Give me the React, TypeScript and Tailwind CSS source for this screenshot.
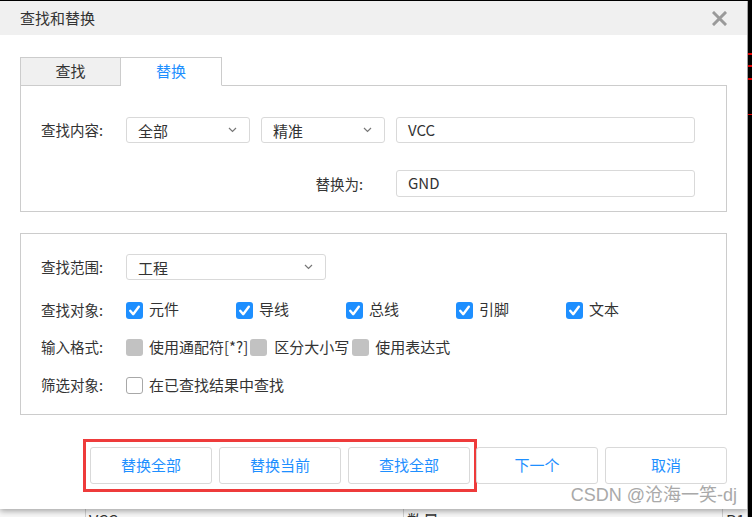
import React from "react";

const FONT = { fontFamily: '"Microsoft YaHei", "Noto Sans CJK SC", "Noto Sans", sans-serif' };

function Chevron() {
  return (
    <svg width="9" height="6" viewBox="0 0 9 6" className="shrink-0">
      <path d="M1 1 L4.5 4.5 L8 1" fill="none" stroke="#777" strokeWidth="1.2" />
    </svg>
  );
}

function Select({ value, w }: { value: string; w: string }) {
  return (
    <div className={`${w} h-[26px] flex items-center justify-between pl-[11px] pr-[12px] border border-[#d9d9d9] rounded-[3px] bg-white`}>
      <span className="text-[15px] text-[#333] leading-none">{value}</span>
      <Chevron />
    </div>
  );
}

function Checked() {
  return (
    <div className="w-[17px] h-[17px] rounded-[3px] bg-[#1e8fff] flex items-center justify-center shrink-0">
      <svg width="13" height="13" viewBox="0 0 13 13">
        <path d="M2.2 6.8 L5.2 10.2 L10.8 2.8" fill="none" stroke="white" strokeWidth="2.4" strokeLinecap="round" strokeLinejoin="round" />
      </svg>
    </div>
  );
}

function GrayBox() {
  return <div className="w-[17px] h-[17px] rounded-[3px] bg-[#c2c2c2] shrink-0" />;
}

function EmptyBox() {
  return <div className="w-[17px] h-[17px] rounded-[3px] border border-[#a8a8a8] bg-white shrink-0" />;
}

function Btn({ label }: { label: string }) {
  return (
    <div className="w-[122px] h-[37px] flex items-center justify-center border border-[#d9d9d9] rounded-[3px] bg-white text-[15px] text-[#1e8fff]">
      {label}
    </div>
  );
}

export default function App() {
  return (
    <div className="relative w-[752px] h-[517px] overflow-hidden bg-black pt-[1px] flex" style={FONT}>
      <div className="w-[747px] flex flex-col">
        {/* Dialog */}
        <div className="relative z-10 h-[508px] bg-white flex flex-col shadow-[0_2px_6px_rgba(0,0,0,0.35)]">
          {/* Header */}
          <div className="h-[34px] bg-[#f0f0f0] flex items-center justify-between pl-[20px] pr-[20px]">
            <span className="text-[15px] text-[#333]">查找和替换</span>
            <svg width="15" height="15" viewBox="0 0 15 15">
              <path d="M2 2 L13 13 M13 2 L2 13" stroke="#9a9a9a" strokeWidth="3" strokeLinecap="square" />
            </svg>
          </div>

          <div className="px-[20px] pt-[22px] flex flex-col">
            {/* Tabs */}
            <div className="flex h-[29px] relative z-10">
              <div className="w-[101px] h-[29px] border border-[#cccccc] bg-[#f0f0f0] flex items-center justify-center text-[15px] text-[#333]">
                查找
              </div>
              <div className="w-[101px] h-[29px] border border-l-0 border-[#cccccc] border-b-white bg-white flex items-center justify-center text-[15px] text-[#1e8fff]">
                替换
              </div>
            </div>

            {/* Panel 1 */}
            <div className="-mt-[1px] h-[127px] border border-[#cccccc] pl-[20px] pt-[31px]">
              <div className="flex items-center h-[26px]">
                <span className="w-[85px] text-[14.5px] text-[#333]">查找内容:</span>
                <Select value="全部" w="w-[124px]" />
                <div className="w-[11px]" />
                <Select value="精准" w="w-[124px]" />
                <div className="w-[11px]" />
                <div className="w-[299px] h-[26px] border border-[#d9d9d9] rounded-[3px] flex items-center pl-[11px] text-[15px] text-[#333]">
                  VCC
                </div>
              </div>
              <div className="flex items-center h-[27px] mt-[27px]">
                <span className="w-[322px] text-right text-[14.5px] text-[#333]">替换为:</span>
                <div className="w-[33px]" />
                <div className="w-[299px] h-[27px] border border-[#d9d9d9] rounded-[3px] flex items-center pl-[11px] text-[15px] text-[#333]">
                  GND
                </div>
              </div>
            </div>

            {/* Panel 2 */}
            <div className="mt-[21px] h-[182px] border border-[#cccccc] pl-[20px] pt-[20px] flex flex-col">
              <div className="flex items-center h-[26px]">
                <span className="w-[85px] text-[14.5px] text-[#333]">查找范围:</span>
                <Select value="工程" w="w-[200px]" />
              </div>
              <div className="flex items-center h-[26px] mt-[17px]">
                <span className="w-[85px] text-[14.5px] text-[#333]">查找对象:</span>
                {["元件", "导线", "总线", "引脚", "文本"].map((t) => (
                  <div key={t} className="w-[110px] flex items-center">
                    <Checked />
                    <span className="ml-[6px] text-[15px] text-[#333] leading-none -mt-[3px]">{t}</span>
                  </div>
                ))}
              </div>
              <div className="flex items-center h-[26px] mt-[11px]">
                <span className="w-[85px] text-[14.5px] text-[#333]">输入格式:</span>
                <GrayBox />
                <span className="ml-[6px] mr-[2px] text-[15px] text-[#333]">使用通配符[*?]</span>
                <GrayBox />
                <span className="ml-[7px] mr-[3px] text-[15px] text-[#333]">区分大小写</span>
                <GrayBox />
                <span className="ml-[6px] text-[15px] text-[#333]">使用表达式</span>
              </div>
              <div className="flex items-center h-[26px] mt-[12px]">
                <span className="w-[85px] text-[14.5px] text-[#333]">筛选对象:</span>
                <EmptyBox />
                <span className="ml-[6px] text-[15px] text-[#333]">在已查找结果中查找</span>
              </div>
            </div>

            {/* Buttons */}
            <div className="mt-[24px] flex items-center">
              <div className="ml-[63px] w-[394px] h-[53px] border-[3px] border-[#ee3b3b] flex items-center pl-[4px] gap-[7px]">
                <Btn label="替换全部" />
                <Btn label="替换当前" />
                <Btn label="查找全部" />
              </div>
              <div className="ml-[-1px] flex gap-[7px]">
                <Btn label="下一个" />
                <Btn label="取消" />
              </div>
            </div>
            <div className="flex justify-end -mt-[6px]">
              <span className="text-[18px] text-[#a9a9a9] leading-none mr-[-10px]" style={{ fontFamily: '"Liberation Sans", "Noto Sans CJK SC", sans-serif' }}>
                CSDN @沧海一笑-dj
              </span>
            </div>
          </div>
        </div>

        {/* Underlying table row */}
        <div className="flex-1 bg-[#f7f7f7] flex overflow-hidden">
          <div className="w-[86px] border-r border-[#cfcfcf]" />
          <div className="w-[318px] border-r border-[#cfcfcf] pl-[3px] text-[16px] text-[#333] leading-none pt-[3px]">VCC</div>
          <div className="w-[319px] border-r border-[#cfcfcf] pl-[3px] text-[16px] text-[#333] leading-none pt-[3px]">数量</div>
          <div className="flex-1 pl-[3px] text-[16px] text-[#333] leading-none pt-[3px]">P1</div>
        </div>
      </div>

      {/* Right background strip */}
      <div className="w-[5px] bg-black flex flex-col border-l border-[#bdbdbd]">
        <div className="h-[52px]" />
        <div className="h-[2px] bg-[#e00]" />
        <div className="h-[10px]" />
        <div className="h-[2px] bg-[#e00]" />
        <div className="h-[11px]" />
        <div className="h-[2px] bg-[#e00]" />
        <div className="h-[34px]" />
        <div className="h-[1px] bg-[#e00]" />
      </div>
    </div>
  );
}
